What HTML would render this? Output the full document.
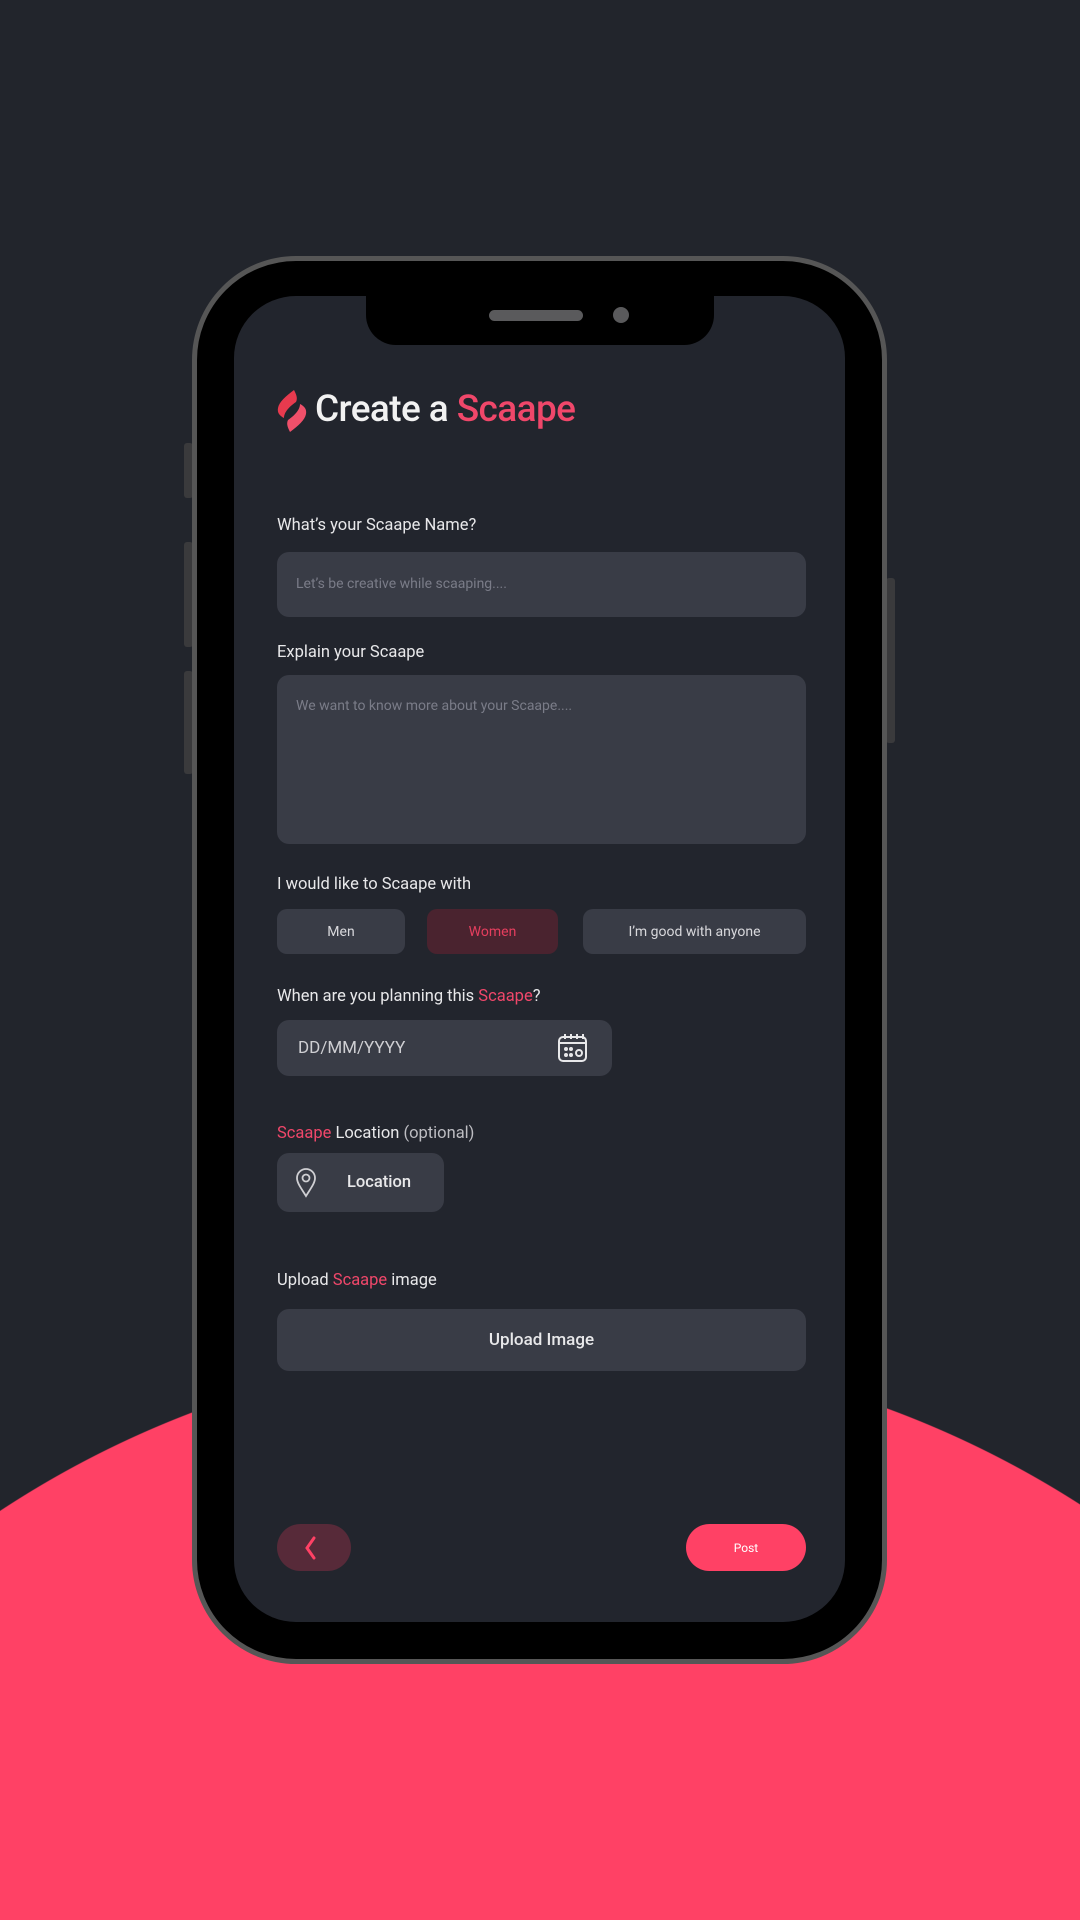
<!DOCTYPE html>
<html><head><meta charset="utf-8"><style>
*{margin:0;padding:0;box-sizing:border-box}
html,body{width:1080px;height:1920px;overflow:hidden;background:#22252c;font-family:"Roboto","Liberation Sans",sans-serif}
#wrap{position:relative;width:1080px;height:1920px;overflow:hidden;background:radial-gradient(circle 991px at 545px 2338px,#ff4165 990px,#22252c 991px)}
.abs{position:absolute}
.side{background:#3a3a3c;border-radius:3px}
.phone{left:192px;top:256px;width:695px;height:1408px;border-radius:104px;background:#000;border:5px solid #565656}
.screen{left:234px;top:296px;width:611px;height:1326px;border-radius:62px;background:#22252d;overflow:hidden}
.notch{left:366px;top:290px;width:348px;height:55px;background:#000;border-radius:0 0 30px 30px}
.lbl{color:#e8e8ea;font-size:16.5px;left:277px}
.pk{color:#f0476a}
.box{background:#393c46;border-radius:12px}
.ph{color:#7a7c88;font-size:14px}
.chip{background:#393c46;border-radius:10px;color:#d8d8dc;font-size:14px;display:flex;align-items:center;justify-content:center}
</style></head><body><div id="wrap">
<div class="abs side" style="left:184px;top:443px;width:9px;height:55px"></div>
<div class="abs side" style="left:184px;top:542px;width:9px;height:105px"></div>
<div class="abs side" style="left:184px;top:671px;width:9px;height:103px"></div>
<div class="abs side" style="left:886px;top:578px;width:9px;height:165px"></div>
<div class="abs phone"></div>
<div class="abs screen"></div>
<div class="abs notch"></div>
<div class="abs" style="left:489px;top:310px;width:94px;height:11px;border-radius:6px;background:#5a5a5c"></div>
<div class="abs" style="left:613px;top:307px;width:16px;height:16px;border-radius:50%;background:#5a5a5c"></div>

<svg class="abs" style="left:276px;top:390px" width="32" height="42" viewBox="0 0 32 42">
<path d="M18 0 C10 6 3 12 2 18 C1 23 4 26 8 28 C8 22 14 16 20 12 C22 8 20 4 18 0Z" fill="#e83a4e"/>
<path d="M14 42 C22 36 29 30 30 24 C31 19 28 16 24 14 C24 20 18 26 12 30 C10 34 12 38 14 42Z" fill="#f0506a"/>
</svg>
<div class="abs" style="left:315px;top:387px;font-size:37px;font-weight:500;color:#f2f2f2;letter-spacing:-0.6px;line-height:46px">Create a <span style="color:#f0476a">Scaape</span></div>

<div class="abs lbl" style="top:516px">What’s your Scaape Name?</div>
<div class="abs box" style="left:277px;top:552px;width:529px;height:65px"></div>
<div class="abs ph" style="left:296px;top:576px">Let’s be creative while scaaping....</div>

<div class="abs lbl" style="top:643px">Explain your Scaape</div>
<div class="abs box" style="left:277px;top:675px;width:529px;height:169px"></div>
<div class="abs ph" style="left:296px;top:698px">We want to know more about your Scaape....</div>

<div class="abs lbl" style="top:875px">I would like to Scaape with</div>
<div class="abs chip" style="left:277px;top:909px;width:128px;height:45px">Men</div>
<div class="abs chip" style="left:427px;top:909px;width:131px;height:45px;background:#4a232f;color:#e53e5e">Women</div>
<div class="abs chip" style="left:583px;top:909px;width:223px;height:45px">I’m good with anyone</div>

<div class="abs lbl" style="top:987px">When are you planning this <span class="pk">Scaape</span>?</div>
<div class="abs box" style="left:277px;top:1020px;width:335px;height:56px"></div>
<div class="abs" style="left:298px;top:1038px;font-size:17px;color:#cfcfd3">DD/MM/YYYY</div>
<svg class="abs" style="left:557px;top:1033px" width="32" height="30" viewBox="0 0 32 30" fill="none" stroke="#e8e8ea" stroke-width="2">
<rect x="2" y="4" width="27" height="24" rx="4"/><path d="M8 1v5M14 1v5M20 1v5M26 1v5M2 10h27"/>
<circle cx="9" cy="16" r="1" fill="#e8e8ea"/><circle cx="14" cy="16" r="1" fill="#e8e8ea"/><circle cx="9" cy="22" r="1" fill="#e8e8ea"/><circle cx="14" cy="22" r="1" fill="#e8e8ea"/><circle cx="22" cy="20" r="3"/>
</svg>

<div class="abs lbl" style="top:1124px"><span class="pk">Scaape</span> Location <span style="color:#bdbdc2">(optional)</span></div>
<div class="abs box" style="left:277px;top:1153px;width:167px;height:59px"></div>
<svg class="abs" style="left:295px;top:1168px" width="22" height="30" viewBox="0 0 22 30" fill="none" stroke="#cfcfd3" stroke-width="1.8">
<path d="M11 28 C6 20 2 15 2 10 A9 9 0 0 1 20 10 C20 15 16 20 11 28Z"/><circle cx="11" cy="10" r="3.5"/>
</svg>
<div class="abs" style="left:347px;top:1173px;font-size:16.5px;font-weight:500;color:#e8e8ea">Location</div>

<div class="abs lbl" style="top:1271px">Upload <span class="pk">Scaape</span> image</div>
<div class="abs box" style="left:277px;top:1309px;width:529px;height:62px;display:flex;align-items:center;justify-content:center;color:#e8e8ea;font-size:17px;font-weight:500">Upload Image</div>

<div class="abs" style="left:277px;top:1524px;width:74px;height:47px;border-radius:24px;background:#572a39"></div>
<svg class="abs" style="left:302px;top:1535px" width="16" height="26" viewBox="0 0 16 26"><path d="M12 3 L5 13 L12 23" fill="none" stroke="#ff4165" stroke-width="3" stroke-linecap="round"/></svg>
<div class="abs" style="left:686px;top:1524px;width:120px;height:47px;border-radius:24px;background:#ff4165;color:#fff;font-size:12px;display:flex;align-items:center;justify-content:center">Post</div>
</div></body></html>
